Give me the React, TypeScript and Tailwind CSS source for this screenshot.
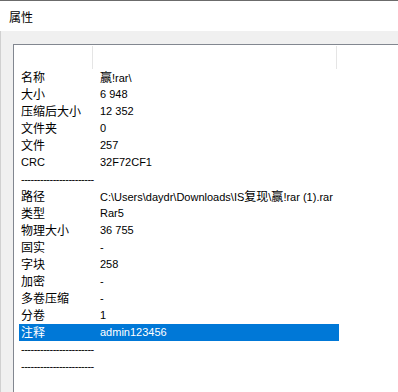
const rows: [string, string][] = [
  ["名称", "赢!rar\\"],
  ["大小", "6 948"],
  ["压缩后大小", "12 352"],
  ["文件夹", "0"],
  ["文件", "257"],
  ["CRC", "32F72CF1"],
  ["--", ""],
  ["路径", "C:\\Users\\daydr\\Downloads\\IS复现\\赢!rar (1).rar"],
  ["类型", "Rar5"],
  ["物理大小", "36 755"],
  ["固实", "-"],
  ["字块", "258"],
  ["加密", "-"],
  ["多卷压缩", "-"],
  ["分卷", "1"],
  ["注释", "admin123456"],
  ["--", ""],
  ["--", ""],
];

const DASHES = "-----------------------";

// CJK runs get the 12px fallback font, latin stays at 11px like MS Shell Dlg
function Mixed({ text }: { text: string }) {
  const parts = text.match(/[\u3400-\u9fff]+|[^\u3400-\u9fff]+/g) ?? [];
  return (
    <>
      {parts.map((p, i) =>
        /[\u3400-\u9fff]/.test(p) ? (
          <span key={i} className="font-['Noto_Sans_CJK_SC',sans-serif] text-[12px]">
            {p}
          </span>
        ) : (
          <span key={i}>{p}</span>
        ),
      )}
    </>
  );
}

function Row({ name, value, selected }: { name: string; value: string; selected: boolean }) {
  return (
    <div
      className={
        "flex h-[17px] w-[320px] items-center leading-[17px] " +
        (selected ? "bg-[#0078d7] text-white" : "text-black")
      }
    >
      <div className="w-[75px] shrink-0 whitespace-nowrap pl-[2px]">
        {name === "--" ? <span className="tracking-[-0.5px]">{DASHES}</span> : <Mixed text={name} />}
      </div>
      <div className="min-w-0 flex-1 whitespace-nowrap pl-[6px]">
        <Mixed text={value} />
      </div>
    </div>
  );
}

export default function App() {
  return (
    <div className="flex h-[392px] w-[398px] flex-col overflow-hidden bg-white font-['Liberation_Sans','Noto_Sans_CJK_SC',sans-serif] text-[11px]">
      {/* title bar */}
      <div className="h-[31px] shrink-0 border-t border-[#6b6b6b] bg-white pl-[9px] pt-[7px] leading-[17px] text-black">
        <Mixed text="属性" />
      </div>
      {/* dialog body */}
      <div className="flex min-h-0 flex-1 flex-col border-l border-[#d0d0d0] bg-[#f0f0f0] pl-[12px] pt-[13px]">
        <div className="flex min-h-0 flex-1 flex-col border-l border-t border-[#828790] bg-white">
          {/* empty column header */}
          <div className="flex h-[24px] shrink-0 pt-[1px]">
            <div className="w-[79px] shrink-0 border-r border-[#e5e5e5]" />
            <div className="w-[244px] shrink-0 border-r border-[#e5e5e5]" />
          </div>
          <div className="flex flex-col pl-[5px]">
            {rows.map(([n, v], i) => (
              <Row key={i} name={n} value={v} selected={n === "注释"} />
            ))}
          </div>
        </div>
      </div>
    </div>
  );
}
